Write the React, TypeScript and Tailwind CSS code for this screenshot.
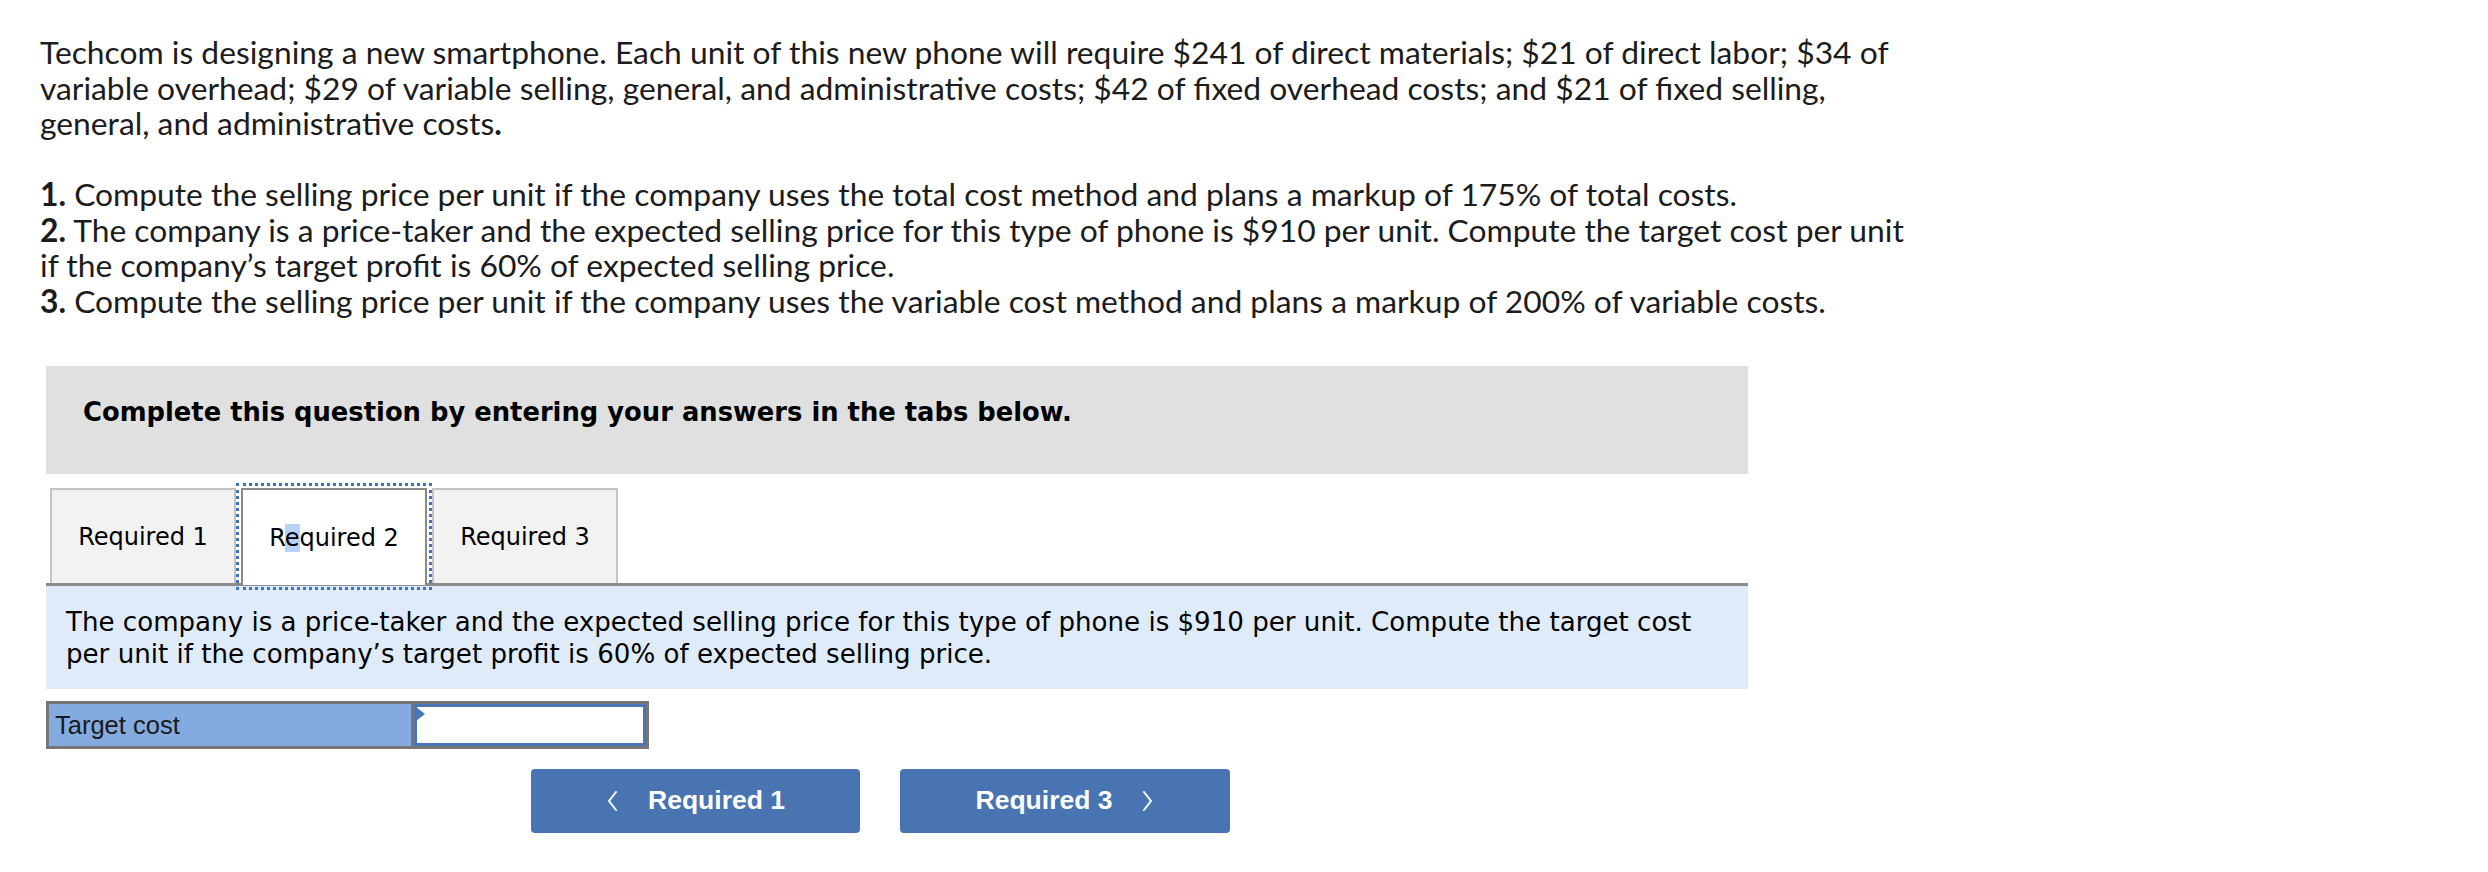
import React from 'react'

const introLines = [
  'Techcom is designing a new smartphone. Each unit of this new phone will require $241 of direct materials; $21 of direct labor; $34 of',
  'variable overhead; $29 of variable selling, general, and administrative costs; $42 of fixed overhead costs; and $21 of fixed selling,',
]

function Chevron({ dir }: { dir: 'left' | 'right' }) {
  return (
    <svg width="12" height="22" viewBox="0 0 12 22" fill="none" className="shrink-0">
      <polyline
        points={dir === 'left' ? '10,2 3,11 10,20' : '2,2 9,11 2,20'}
        stroke="white"
        strokeWidth="2"
        strokeLinecap="round"
        strokeLinejoin="round"
      />
    </svg>
  )
}

export default function App() {
  const tabs = ['Required 1', 'Required 2', 'Required 3']
  const active = 1

  return (
    <div className="relative h-[872px] w-[2488px] overflow-hidden bg-white">
      {/* problem statement */}
      <div className="pl-[40px] pt-[35px] font-['Lato',sans-serif] text-[31.8px] leading-[35.5px] text-[#1c1c1c]">
        {introLines.map((line) => (
          <div key={line} className="whitespace-nowrap">
            {line}
          </div>
        ))}
        <div className="whitespace-nowrap">
          general, and administrative costs<b>.</b>
        </div>
        <div className="h-[35.5px]" />
        <div className="whitespace-nowrap">
          <b>1.</b> Compute the selling price per unit if the company uses the total cost method and plans a markup of 175% of total costs.
        </div>
        <div className="whitespace-nowrap">
          <b>2.</b> The company is a price-taker and the expected selling price for this type of phone is $910 per unit. Compute the target cost per unit
        </div>
        <div className="whitespace-nowrap">if the company’s target profit is 60% of expected selling price.</div>
        <div className="whitespace-nowrap">
          <b>3.</b> Compute the selling price per unit if the company uses the variable cost method and plans a markup of 200% of variable costs.
        </div>
      </div>

      {/* answer area */}
      <div className="ml-[46px] mt-[47px] w-[1702px] font-['DejaVu_Sans',Verdana,sans-serif]">
        <div className="h-[108px] bg-[#e0e0e0] pl-[37px] pt-[30px] text-[25.8px] font-bold leading-[32px] text-black">
          Complete this question by entering your answers in the tabs below.
        </div>

        <div className="mt-[14px] flex gap-[5px] border-b-[3px] border-[#8c8c8c] pl-[4px]">
          {tabs.map((tab, i) => (
            <div
              key={tab}
              className={
                i === active
                  ? 'relative -mb-[3px] flex h-[97px] w-[186px] items-center justify-center border-2 border-b-0 border-[#8a8a8a] bg-white text-[24px] text-black outline-[3px] outline-dotted outline-offset-[2px] outline-[#3f72c4]'
                  : 'flex h-[95px] w-[186px] items-center justify-center border-2 border-b-0 border-[#c4c4c4] bg-[#f2f2f2] text-[24px] text-black'
              }
            >
              {i === active ? (
                <span>
                  R<span className="bg-[#b6d2f6]">e</span>quired 2
                </span>
              ) : (
                tab
              )}
            </div>
          ))}
        </div>

        <div className="bg-[#dfebf8] pb-[19px] pl-[20px] pr-[40px] pt-[20px] text-[26.1px] leading-[32px] text-black">
          The company is a price-taker and the expected selling price for this type of phone is $910 per unit. Compute the target cost
          <br />
          per unit if the company’s target profit is 60% of expected selling price.
        </div>

        <div className="mt-[12px] flex h-[48px] w-[603px] border-[3px] border-[#767676] font-['Liberation_Sans',Arial,sans-serif]">
          <div className="flex w-[365px] items-center border-r-[3px] border-[#767676] bg-[#83abdf] pl-[6px] text-[25.5px] text-[#1a1a1a]">
            Target cost
          </div>
          <div className="relative flex-1 border-[3px] border-[#4a76b5] bg-white">
            <div className="absolute left-[-1px] top-[0px] h-0 w-0 border-y-[7px] border-l-[9px] border-y-transparent border-l-[#4a76b5]" />
          </div>
        </div>

        <div className="ml-[485px] mt-[20px] flex gap-[40px] font-['Liberation_Sans',Arial,sans-serif] text-[26.5px] font-bold text-white">
          <div className="flex h-[64px] w-[329px] items-center justify-center gap-[30px] rounded-[4px] bg-[#4874b2]">
            <Chevron dir="left" />
            <span>Required 1</span>
          </div>
          <div className="flex h-[64px] w-[330px] items-center justify-center gap-[30px] rounded-[4px] bg-[#4874b2]">
            <span>Required 3</span>
            <Chevron dir="right" />
          </div>
        </div>
      </div>
    </div>
  )
}
